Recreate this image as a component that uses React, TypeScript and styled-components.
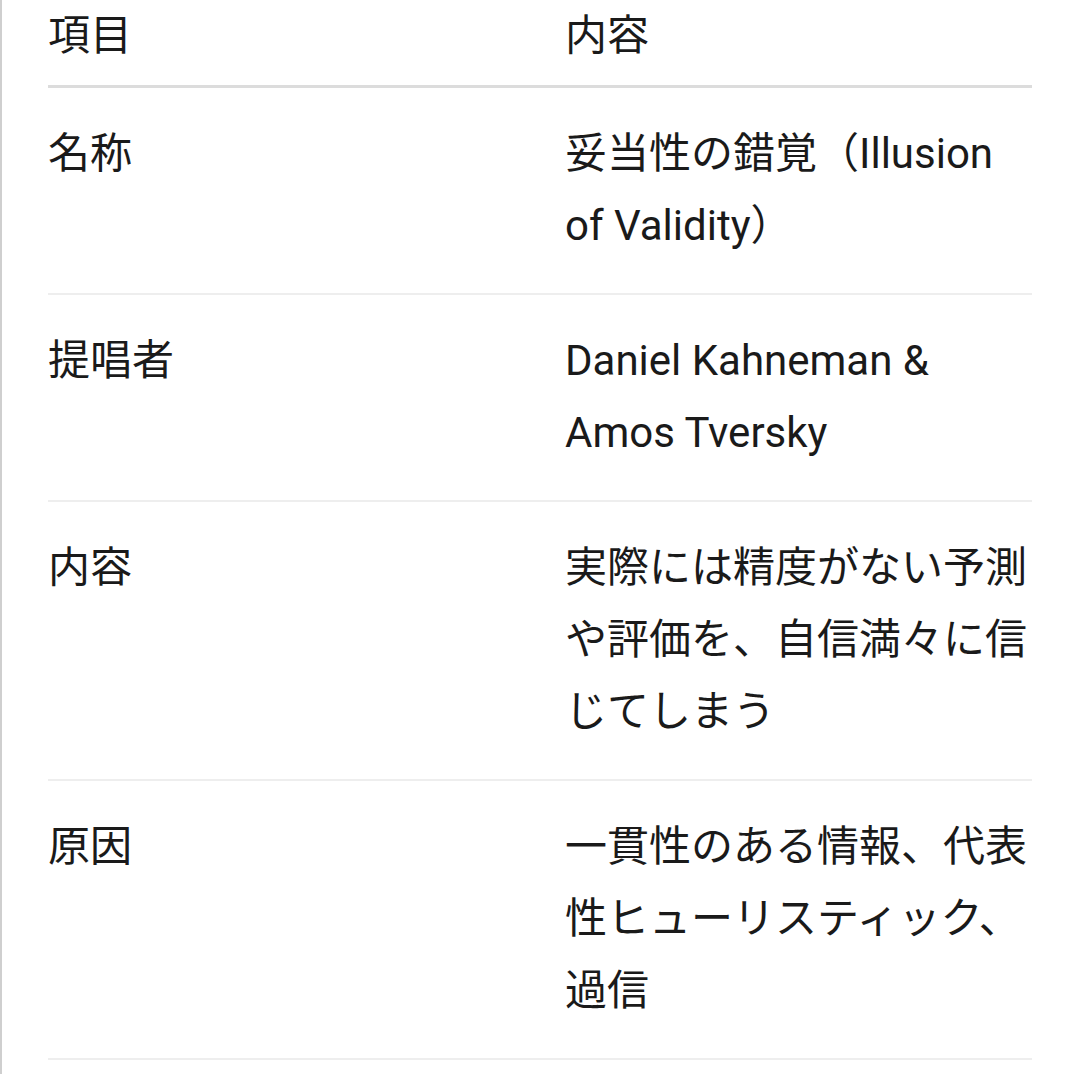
import React from "react";
import styled, { createGlobalStyle } from "styled-components";

const Global = createGlobalStyle`
  html, body {
    margin: 0;
    padding: 0;
    background: #ffffff;
  }
  body {
    font-family: Roboto, "Noto Sans CJK JP", sans-serif;
    color: #1a1a1a;
    overflow: hidden;
  }
`;

const Page = styled.div`
  min-height: 1074px;
  border-left: 2px solid #cfcfcf;
  padding: 0 48px 0 46px;
  box-sizing: border-box;
`;

const Table = styled.table`
  width: 984px;
  border-collapse: collapse;
  table-layout: fixed;
  font-size: 42px;
  line-height: 72px;
`;

const Col = styled.col<{ $w: number }>`
  width: ${(p) => p.$w}px;
`;

const HeadCell = styled.th`
  text-align: left;
  font-weight: 400;
  padding: 0 0 13px;
  border-bottom: 3px solid #dcdcdc;
  vertical-align: top;
`;

const Row = styled.tr`
  border-bottom: 2px solid #eeeeee;
`;

const Cell = styled.td`
  padding: 30px 0 31px;
  vertical-align: top;
  word-break: normal;
  line-break: strict;
`;

const rows: [string, string][] = [
  ["名称", "妥当性の錯覚（Illusion of Validity）"],
  ["提唱者", "Daniel Kahneman & Amos Tversky"],
  ["内容", "実際には精度がない予測や評価を、自信満々に信じてしまう"],
  ["原因", "一貫性のある情報、代表性ヒューリスティック、過信"],
];

export default function App() {
  return (
    <>
      <Global />
      <Page>
        <Table>
          <colgroup>
            <Col $w={517} />
            <Col $w={467} />
          </colgroup>
          <thead>
            <tr>
              <HeadCell>項目</HeadCell>
              <HeadCell>内容</HeadCell>
            </tr>
          </thead>
          <tbody>
            {rows.map(([k, v]) => (
              <Row key={k}>
                <Cell>{k}</Cell>
                <Cell>{v}</Cell>
              </Row>
            ))}
          </tbody>
        </Table>
      </Page>
    </>
  );
}
